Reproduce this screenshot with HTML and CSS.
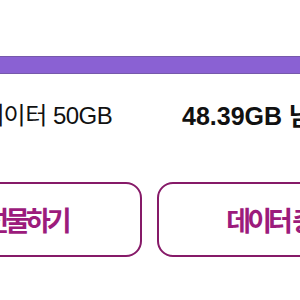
FILE: index.html
```html
<!DOCTYPE html>
<html lang="ko">
<head>
    <meta charset="UTF-8">
    <title>데이터 선물하기</title>
    <link rel="stylesheet" href="styles.css">
</head>
<body>
<div id="page">
    <div class="bar"></div>
    <div class="usage">
        <span class="total">데이터 50GB</span>
        <span class="left">48.39GB 남음</span>
    </div>
    <div class="actions">
        <a class="btn gift">선물하기</a>
        <a class="btn charge">데이터 충전하기</a>
    </div>
</div>
</body>
</html>
```

FILE: styles.css
```css
*{
    margin: 0;
    padding: 0;
    box-sizing: border-box;
}
body{
    background: #fff;
    font-family: "Liberation Sans", "Noto Sans CJK KR", sans-serif;
    color: #111;
    overflow: hidden;
}
#page{
    width: 300px;
    height: 300px;
    overflow: hidden;
}
.bar{
    margin-top: 56px;
    height: 18px;
    background: #8a61d3;
    border-top: 1px solid #7659ab;
    border-bottom: 1px solid #7659ab;
}
.usage{
    display: flex;
    margin-top: 28px;
    height: 28px;
    line-height: 28px;
    white-space: nowrap;
}
.usage .total{
    flex: none;
    width: 130px;
    margin-left: -18px;
    font-size: 24px;
    letter-spacing: -0.5px;
}
.usage .left{
    flex: none;
    margin-left: 70px;
    font-size: 25px;
    font-weight: bold;
}
.actions{
    display: flex;
    gap: 15px;
    margin-top: 52px;
}
.btn{
    flex: none;
    display: flex;
    align-items: center;
    justify-content: center;
    height: 75px;
    border: 2px solid #861a68;
    border-radius: 16px;
    color: #9c1b7c;
    font-size: 27px;
    font-weight: bold;
    letter-spacing: -4px;
    white-space: nowrap;
}
.gift{
    width: 232px;
    margin-left: -90px;
}
.charge{
    width: 288px;
}
```
